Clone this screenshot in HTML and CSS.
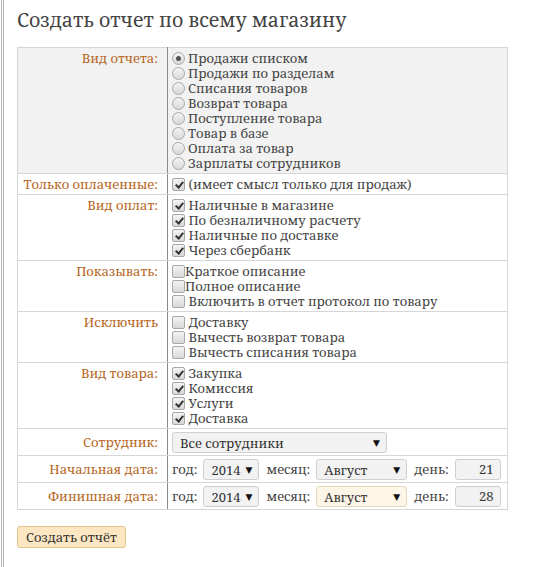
FILE: index.html
```html
<!DOCTYPE html>
<html lang="ru">
<head>
<meta charset="utf-8">
<link rel="stylesheet" href="styles.css">
</head>
<body>
<div class="page">
  <h1 class="title">Создать отчет по всему магазину</h1>
  <table class="report">
    <colgroup>
      <col class="col-lbl">
      <col class="col-val">
    </colgroup>
    <tr class="shaded">
      <td class="lbl">Вид отчета:</td>
      <td class="val">
        <label class="opt"><span class="radio on"></span>Продажи списком</label>
        <label class="opt"><span class="radio"></span>Продажи по разделам</label>
        <label class="opt"><span class="radio"></span>Списания товаров</label>
        <label class="opt"><span class="radio"></span>Возврат товара</label>
        <label class="opt"><span class="radio"></span>Поступление товара</label>
        <label class="opt"><span class="radio"></span>Товар в базе</label>
        <label class="opt"><span class="radio"></span>Оплата за товар</label>
        <label class="opt"><span class="radio"></span>Зарплаты сотрудников</label>
      </td>
    </tr>
    <tr>
      <td class="lbl">Только оплаченные:</td>
      <td class="val">
        <label class="opt"><span class="check on"></span> (имеет смысл только для продаж)</label>
      </td>
    </tr>
    <tr>
      <td class="lbl">Вид оплат:</td>
      <td class="val">
        <label class="opt"><span class="check on"></span> Наличные в магазине</label>
        <label class="opt"><span class="check on"></span> По безналичному расчету</label>
        <label class="opt"><span class="check on"></span> Наличные по доставке</label>
        <label class="opt"><span class="check on"></span> Через сбербанк</label>
      </td>
    </tr>
    <tr>
      <td class="lbl">Показывать:</td>
      <td class="val">
        <label class="opt"><span class="check"></span>Краткое описание</label>
        <label class="opt"><span class="check"></span>Полное описание</label>
        <label class="opt"><span class="check"></span> Включить в отчет протокол по товару</label>
      </td>
    </tr>
    <tr>
      <td class="lbl">Исключить</td>
      <td class="val">
        <label class="opt"><span class="check"></span> Доставку</label>
        <label class="opt"><span class="check"></span> Вычесть возврат товара</label>
        <label class="opt"><span class="check"></span> Вычесть списания товара</label>
      </td>
    </tr>
    <tr>
      <td class="lbl">Вид товара:</td>
      <td class="val">
        <label class="opt"><span class="check on"></span> Закупка</label>
        <label class="opt"><span class="check on"></span> Комиссия</label>
        <label class="opt"><span class="check on"></span> Услуги</label>
        <label class="opt"><span class="check on"></span> Доставка</label>
      </td>
    </tr>
    <tr>
      <td class="lbl mid">Сотрудник:</td>
      <td class="val">
        <div class="select wide"><span>Все сотрудники</span><span class="arrow">▼</span></div>
      </td>
    </tr>
    <tr>
      <td class="lbl mid">Начальная дата:</td>
      <td class="val">
        <div class="daterow">
          <span class="cap">год:</span>
          <div class="select year"><span>2014</span><span class="arrow">▼</span></div>
          <span class="cap">месяц:</span>
          <div class="select month"><span>Август</span><span class="arrow">▼</span></div>
          <span class="cap">день:</span>
          <div class="day">21</div>
        </div>
      </td>
    </tr>
    <tr>
      <td class="lbl mid">Финишная дата:</td>
      <td class="val">
        <div class="daterow">
          <span class="cap">год:</span>
          <div class="select year"><span>2014</span><span class="arrow">▼</span></div>
          <span class="cap">месяц:</span>
          <div class="select month hot"><span>Август</span><span class="arrow">▼</span></div>
          <span class="cap">день:</span>
          <div class="day">28</div>
        </div>
      </td>
    </tr>
  </table>
  <button class="submit" type="button">Создать отчёт</button>
</div>
</body>
</html>
```

FILE: styles.css
```css
html, body {
  margin: 0;
  padding: 0;
  background: #fff;
}
body {
  font-family: "Noto Serif", "DejaVu Serif", serif;
  font-size: 13px;
  color: #444;
}
.page {
  margin-left: 1px;
  border-left: 3px double #b4b4b4;
  padding: 6px 0 0 13px;
  min-height: 561px;
}
.title {
  font-weight: normal;
  font-size: 19.6px;
  line-height: 28px;
  color: #444;
  margin: 0 0 13px 0;
}
.report {
  border-collapse: collapse;
  table-layout: fixed;
  width: 491px;
}
.col-lbl {
  width: 150px;
}
.report td {
  border: 1px solid #d6d6d6;
  vertical-align: top;
  padding: 3px 4px 2px 4px;
  line-height: 15px;
}
.report tr.shaded td {
  background: #f2f2f2;
}
.report td.lbl {
  text-align: right;
  padding-right: 9px;
  color: #b6661d;
  border-right: 1px solid #8a8a8a;
  white-space: nowrap;
}
.report td.lbl.mid {
  vertical-align: middle;
}
.opt {
  display: flex;
  align-items: center;
  white-space: pre;
  height: 15px;
  line-height: 15px;
}
.radio, .check {
  display: inline-block;
  width: 11px;
  height: 11px;
  border: 1px solid #a8a8a8;
  background: linear-gradient(#f4f4f4, #d8d8d8);
  flex: none;
  margin-right: 3px;
  position: relative;
}
.check {
  border-radius: 2px;
  margin-right: 0;
}
.radio {
  border-radius: 50%;
}
.radio.on::after {
  content: "";
  position: absolute;
  left: 3px;
  top: 3px;
  width: 5px;
  height: 5px;
  border-radius: 50%;
  background: #555;
}
.check.on::after {
  content: "";
  position: absolute;
  left: 4px;
  top: 1px;
  width: 3px;
  height: 6px;
  border: solid #333;
  border-width: 0 2px 2px 0;
  transform: rotate(40deg);
}
.select {
  display: flex;
  align-items: center;
  justify-content: space-between;
  box-sizing: border-box;
  height: 21px;
  border: 1px solid #cfcfcf;
  border-radius: 3px;
  background: #f2f2f2;
  padding: 1px 6px 0 7px;
  color: #333;
}
.select .arrow {
  font-size: 9px;
  color: #111;
  font-family: "DejaVu Sans", sans-serif;
}
.select.wide {
  width: 215px;
}
.select.year {
  width: 56px;
  margin-right: 7px;
}
.select.month {
  width: 91px;
  margin-right: 7px;
}
.select.hot {
  background: #fdf5e6;
  border-color: #e2d6bf;
}
.daterow {
  display: flex;
  align-items: center;
  height: 21px;
}
.cap {
  margin-right: 6px;
}
.day {
  box-sizing: border-box;
  width: 46px;
  height: 21px;
  border: 1px solid #cfcfcf;
  border-radius: 3px;
  background: #f2f2f2;
  text-align: right;
  padding: 0 6px;
  line-height: 19px;
  color: #333;
}
.submit {
  margin-top: 16px;
  font-family: "Noto Serif", "DejaVu Serif", serif;
  font-size: 13px;
  color: #333;
  background: #fde7c3;
  border: 1px solid #e3c68e;
  border-radius: 3px;
  height: 22px;
  padding: 0 8px;
}
```
